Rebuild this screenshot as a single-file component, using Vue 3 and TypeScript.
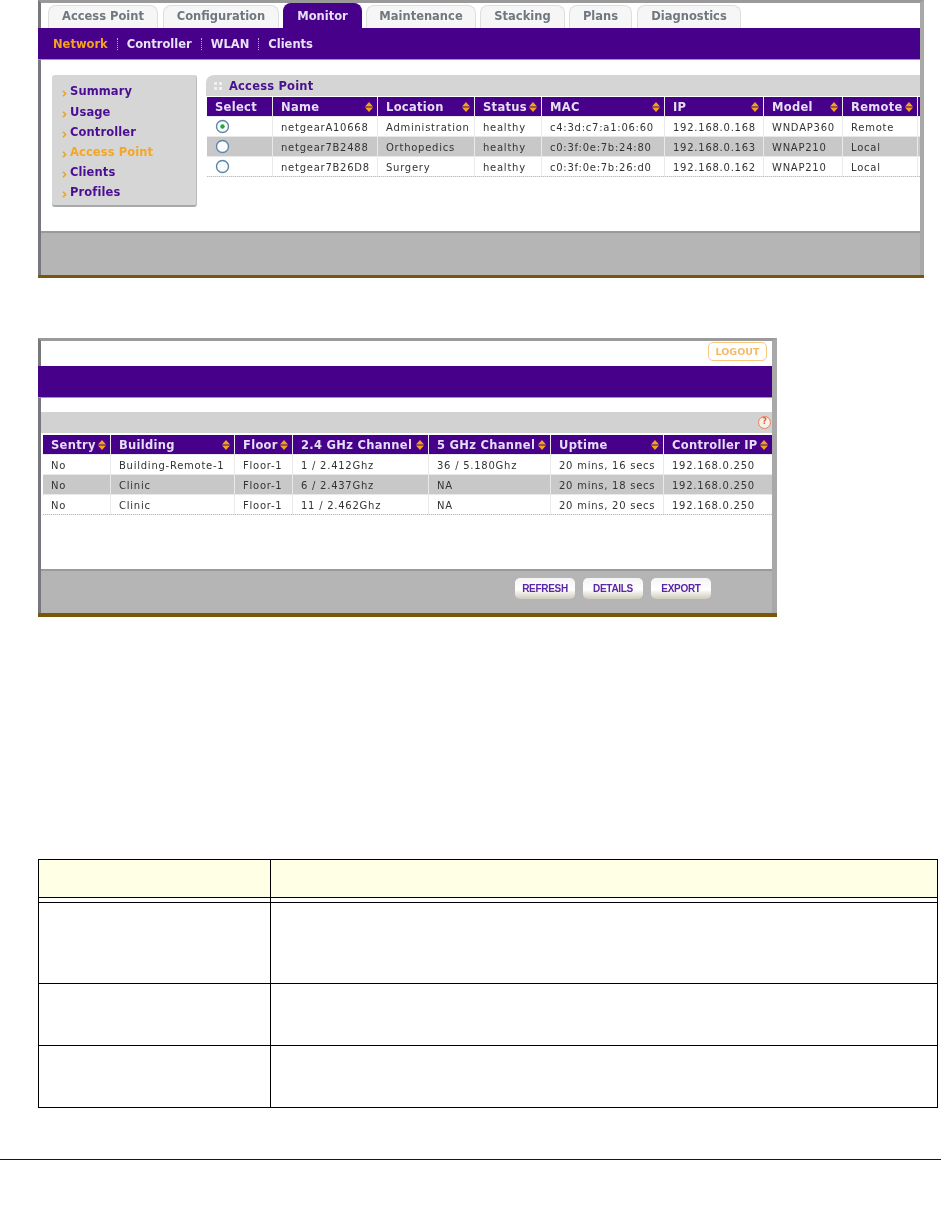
<script setup lang="ts">
const tabs = [
  { label: 'Access Point', w: 110, gap: 5 },
  { label: 'Configuration', w: 116, gap: 4 },
  { label: 'Monitor', w: 79, gap: 4, active: true },
  { label: 'Maintenance', w: 110, gap: 4 },
  { label: 'Stacking', w: 85, gap: 4 },
  { label: 'Plans', w: 63, gap: 5 },
  { label: 'Diagnostics', w: 104, gap: 0 },
]
const subnav = [
  { label: 'Network', active: true },
  { label: 'Controller' },
  { label: 'WLAN' },
  { label: 'Clients' },
]
const menu = ['Summary', 'Usage', 'Controller', 'Access Point', 'Clients', 'Profiles']

const t1Cols = [65, 104, 96, 66, 122, 98, 78, 74, 2]
const t1Heads = ['Select', 'Name', 'Location', 'Status', 'MAC', 'IP', 'Model', 'Remote', '']
const t1Rows = [
  ['', 'netgearA10668', 'Administration', 'healthy', 'c4:3d:c7:a1:06:60', '192.168.0.168', 'WNDAP360', 'Remote', ''],
  ['', 'netgear7B2488', 'Orthopedics', 'healthy', 'c0:3f:0e:7b:24:80', '192.168.0.163', 'WNAP210', 'Local', ''],
  ['', 'netgear7B26D8', 'Surgery', 'healthy', 'c0:3f:0e:7b:26:d0', '192.168.0.162', 'WNAP210', 'Local', ''],
]

const t2Cols = [67, 123, 57, 135, 121, 112, 108]
const t2Heads = ['Sentry', 'Building', 'Floor', '2.4 GHz Channel', '5 GHz Channel', 'Uptime', 'Controller IP']
const t2Rows = [
  ['No', 'Building-Remote-1', 'Floor-1', '1 / 2.412Ghz', '36 / 5.180Ghz', '20 mins, 16 secs', '192.168.0.250'],
  ['No', 'Clinic', 'Floor-1', '6 / 2.437Ghz', 'NA', '20 mins, 18 secs', '192.168.0.250'],
  ['No', 'Clinic', 'Floor-1', '11 / 2.462Ghz', 'NA', '20 mins, 20 secs', '192.168.0.250'],
]
const grid = (cols: number[]) => ({ gridTemplateColumns: cols.map((c) => c + 'px').join(' ') })
</script>

<template>
  <div class="page">
    <section class="frame frame-one">
      <nav class="tabs">
        <div
          v-for="t in tabs"
          :key="t.label"
          class="tab"
          :class="{ active: t.active }"
          :style="{ width: t.w + 'px', marginRight: t.gap + 'px' }"
        >{{ t.label }}</div>
      </nav>
      <div class="band subnav">
        <template v-for="(s, i) in subnav" :key="s.label">
          <span v-if="i" class="sep"></span>
          <span class="sublink" :class="{ on: s.active }">{{ s.label }}</span>
        </template>
      </div>
      <div class="body-one">
        <aside class="menu">
          <div v-for="m in menu" :key="m" class="menu-item" :class="{ on: m === 'Access Point' }">
            <svg class="chev" width="5" height="7" viewBox="0 0 5 7"><path d="M1 .8l2.6 2.7L1 6.2" fill="none" stroke="#f0a020" stroke-width="1.5" /></svg>
            <span>{{ m }}</span>
          </div>
        </aside>
        <div class="content">
          <div class="title-bar">
            <svg class="grip" width="8" height="8" viewBox="0 0 8 8" fill="#efefef">
              <rect x="0" y="0" width="3" height="3" /><rect x="5" y="0" width="3" height="3" />
              <rect x="0" y="5" width="3" height="3" /><rect x="5" y="5" width="3" height="3" />
            </svg>
            <span>Access Point</span>
          </div>
          <div class="table table-one" :style="grid(t1Cols)">
            <div v-for="h in t1Heads" :key="'h' + h" class="th" :class="{ stub: !h }">
              <span>{{ h }}</span>
              <svg v-if="h && h !== 'Select'" class="sort" width="8" height="10" viewBox="0 0 8 10" fill="#f2a31c">
                <path d="M4 0L8 4.4H0zM0 5.6h8L4 10z" />
              </svg>
            </div>
            <template v-for="(r, ri) in t1Rows" :key="ri">
              <div v-for="(c, ci) in r" :key="ci" class="td" :class="{ alt: ri === 1, stub: ci === 8 }">
                <svg v-if="ci === 0" class="radio" width="15" height="15" viewBox="0 0 15 15">
                  <circle cx="7.5" cy="7.5" r="6" fill="#fbfbfb" stroke="#5d86ac" stroke-width="1.4" />
                  <circle v-if="ri === 0" cx="7.5" cy="7.5" r="2.2" fill="#22a83a" />
                </svg>
                <template v-else>{{ c }}</template>
              </div>
            </template>
          </div>
        </div>
      </div>
      <div class="footer"></div>
      <div class="brown"></div>
    </section>

    <section class="frame frame-two">
      <div class="top-two">
        <button class="logout" type="button">LOGOUT</button>
      </div>
      <div class="band band-two"></div>
      <div class="spacer-two"></div>
      <div class="bar-two"><span class="help">?</span></div>
      <div class="table table-two" :style="grid(t2Cols)">
        <div v-for="h in t2Heads" :key="h" class="th">
          <span>{{ h }}</span>
          <svg class="sort" width="8" height="10" viewBox="0 0 8 10" fill="#f2a31c">
            <path d="M4 0L8 4.4H0zM0 5.6h8L4 10z" />
          </svg>
        </div>
        <template v-for="(r, ri) in t2Rows" :key="ri">
          <div v-for="(c, ci) in r" :key="ci" class="td" :class="{ alt: ri === 1 }">{{ c }}</div>
        </template>
      </div>
      <div class="grow"></div>
      <div class="footer footer-two">
        <button class="btn" type="button">REFRESH</button>
        <button class="btn" type="button">DETAILS</button>
        <button class="btn" type="button">EXPORT</button>
      </div>
      <div class="brown brown-two"></div>
    </section>

    <div class="doc-table">
      <div class="dc head"></div><div class="dc head"></div>
      <div class="dc"></div><div class="dc"></div>
      <div class="dc"></div><div class="dc"></div>
      <div class="dc"></div><div class="dc"></div>
      <div class="dc"></div><div class="dc"></div>
    </div>
    <div class="rule"></div>
  </div>
</template>

<style>
html, body { margin: 0; background: #fff; }
</style>

<style scoped>
.page {
  width: 941px;
  height: 1227px;
  overflow: hidden;
  background: #fff;
  font-family: "DejaVu Sans", Verdana, sans-serif;
  display: flex;
  flex-direction: column;
  align-items: flex-start;
}
.frame {
  box-sizing: border-box;
  margin-left: 38px;
  background: #fff;
  border-left: 3px solid #77777c;
  border-top: 3px solid #9a9a9a;
  display: flex;
  flex-direction: column;
  filter: blur(0.5px);
}
.frame-one { width: 886px; height: 278px; border-right: 4px solid #a9a9a9; }
.frame-two { width: 739px; height: 279px; margin-top: 60px; border-right: 5px solid #a9a9a9; }

.tabs { display: flex; align-items: flex-end; height: 25px; padding: 0 0 0 7px; flex: none; }
.tab {
  box-sizing: border-box;
  height: 23px;
  flex: none;
  text-align: center;
  font-weight: 700;
  font-size: 11.5px;
  line-height: 21px;
  color: #6f7780;
  background: #f6f6f6;
  border: 1px solid #dedede;
  border-bottom: 0;
  border-radius: 8px 8px 0 0;
}
.tab.active { background: #47008a; color: #e6e0f2; border-color: #47008a; height: 25px; line-height: 24px; }

.band { background: #47008a; margin-left: -3px; flex: none; height: 32px; border-bottom: 1px solid #9c9c9c; box-sizing: border-box; }
.subnav { display: flex; align-items: center; padding: 1px 0 0 15px; }
.sublink { color: #e8e2f6; font-weight: 700; font-size: 11.5px; }
.sublink.on { color: #f5a020; }
.sep { height: 12px; border-left: 1px dotted #b9a9d8; margin: 0 9px; }

.body-one { flex: none; height: 171px; box-sizing: border-box; padding: 15px 0 0 11px; display: flex; gap: 9px; }
.menu {
  box-sizing: border-box;
  width: 145px;
  height: 132px;
  flex: none;
  background: #d6d6d6;
  border-radius: 3px;
  border-bottom: 2px solid #a9a9a9;
  border-right: 1px solid #bdbdbd;
  padding: 6.4px 0 0 10px;
}
.menu-item {
  height: 20.2px;
  display: flex;
  align-items: center;
  gap: 3px;
  color: #4b0d92;
  font-size: 11.5px;
  font-weight: 700;
  letter-spacing: 0.1px;
}
.menu-item.on { color: #f5a623; }
.chev { margin-top: 5px; flex: none; }

.content { flex: 1; min-width: 0; }
.title-bar {
  height: 21px;
  background: #d5d5d5;
  border-radius: 8px 0 0 0;
  display: flex;
  align-items: center;
  gap: 7px;
  padding-left: 8px;
  color: #47108e;
  font-size: 11.5px;
  font-weight: 700;
  letter-spacing: 0.2px;
}
.table { display: grid; gap: 1px; background: #e9e9e9; margin-left: 1px; width: max-content; border-bottom: 1px dotted #bbb; }
.table-one { margin-top: 1px; }
.th {
  box-sizing: border-box;
  height: 19px;
  background: #47008a;
  color: #e4def2;
  font-size: 11.5px;
  font-weight: 700;
  letter-spacing: 0.3px;
  display: flex;
  align-items: center;
  justify-content: space-between;
  padding: 0 4px 0 8px;
  white-space: nowrap;
  overflow: hidden;
}
.td {
  box-sizing: border-box;
  height: 19px;
  background: #fff;
  color: #333;
  font-size: 10px;
  letter-spacing: 0.75px;
  line-height: 22px;
  padding-left: 8px;
  white-space: nowrap;
  overflow: hidden;
}
.td.alt { background: #c8c8c8; }
.th.stub, .td.stub { padding: 0; }
.sort { flex: none; }
.radio { display: block; margin-top: 2px; }

.footer { background: #b5b5b5; border-top: 2px solid #9a9a9a; box-sizing: border-box; height: 44px; flex: none; }
.brown { height: 3px; background: #7a5608; margin-left: -3px; margin-right: -4px; flex: none; }

.top-two { flex: none; height: 25px; display: flex; justify-content: flex-end; padding: 1px 5px 0 0; box-sizing: border-box; }
.logout {
  box-sizing: border-box;
  width: 59px;
  height: 19px;
  padding: 0;
  background: #fff;
  border: 1.5px solid #fbc67e;
  border-radius: 5px;
  color: #f7b865;
  font-family: "DejaVu Sans", sans-serif;
  font-weight: 700;
  font-size: 9.5px;
}
.spacer-two { height: 14px; flex: none; }
.bar-two {
  height: 21px;
  flex: none;
  background: #d2d2d2;
  display: flex;
  align-items: center;
  justify-content: flex-end;
  padding-right: 1px;
}
.help {
  box-sizing: border-box;
  width: 13px;
  height: 13px;
  border: 1.5px solid #f47a50;
  border-radius: 50%;
  background: #f4f0ea;
  color: #e0603a;
  font-size: 8px;
  font-weight: 700;
  line-height: 10px;
  text-align: center;
}
.table-two { margin: 2px 0 0 2px; }
.grow { flex: 1; }
.footer-two {
  display: flex;
  justify-content: flex-end;
  gap: 8px;
  padding: 7px 61px 0 0;
}
.btn {
  box-sizing: border-box;
  width: 60px;
  height: 21px;
  padding: 0;
  border: 0;
  border-radius: 5px;
  background: linear-gradient(#f4f4f4, #fff 55%, #cfc9bd);
  color: #5a25a6;
  font-family: "Liberation Sans", Arial, sans-serif;
  font-size: 10px;
  font-weight: 700;
  letter-spacing: -0.3px;
}
.brown-two { height: 4px; margin-right: -5px; }

.doc-table {
  margin: 242px 0 0 38px;
  display: grid;
  grid-template-columns: 231px 666px;
  grid-template-rows: 37px 4px 80px 61px 61px;
  gap: 1px;
  padding: 1px;
  background: #000;
  flex: none;
}
.dc { background: #fff; }
.dc.head { background: #ffffe6; }
.rule { align-self: stretch; height: 1px; background: #0000c8; margin-top: 51px; flex: none; }
</style>
